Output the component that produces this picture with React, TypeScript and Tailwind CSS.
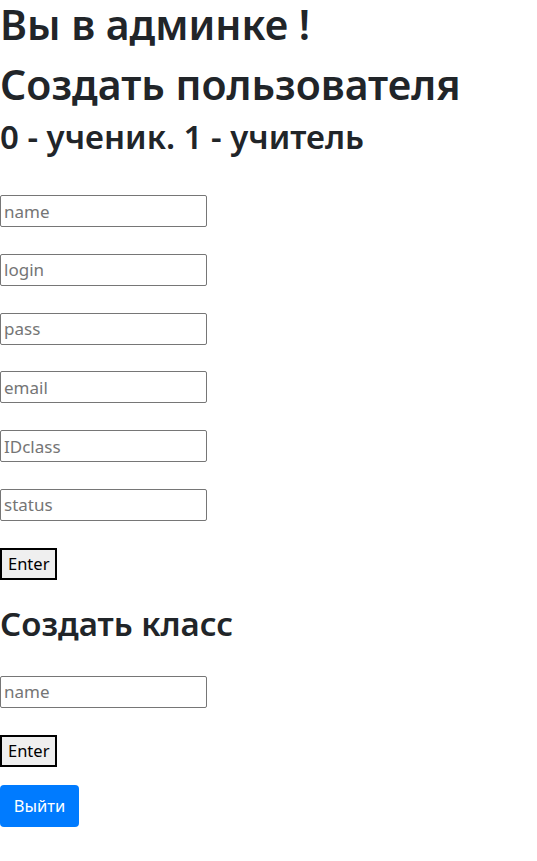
export default function App() {
  const inputCls =
    "block w-[207px] h-[32px] border border-[#767676] rounded-[2px] px-[3px] text-[17px] text-[#212529] placeholder:text-[#757575] bg-white outline-none";
  const btnCls =
    "block h-[32px] px-[6px] border-2 border-black bg-[#efefef] text-[16.5px] text-black leading-none";
  return (
    <div className="min-h-[861px] bg-white text-[#212529]" style={{ fontFamily: '"Noto Sans", "Open Sans", sans-serif' }}>
      <h1 className="text-[41px] leading-[48px] font-semibold mb-[12px]">Вы в админке !</h1>
      <h1 className="text-[41px] leading-[48px] font-semibold mb-[10px]">Создать пользователя</h1>
      <h2 className="text-[33px] leading-[38px] font-semibold">0 - ученик. 1 - учитель</h2>
      <div className="pt-[39px]">
        <input className={inputCls + " mb-[26.8px]"} placeholder="name" />
        <input className={inputCls + " mb-[26.8px]"} placeholder="login" />
        <input className={inputCls + " mb-[26.8px]"} placeholder="pass" />
        <input className={inputCls + " mb-[26.8px]"} placeholder="email" />
        <input className={inputCls + " mb-[26.8px]"} placeholder="IDclass" />
        <input className={inputCls + " mb-[27px]"} placeholder="status" />
        <button className={btnCls}>Enter</button>
      </div>
      <h2 className="text-[33px] leading-[38px] font-semibold mt-[25px] mb-2">Создать класс</h2>
      <div className="pt-[25px]">
        <input className={inputCls + " mb-[27px]"} placeholder="name" />
        <button className={btnCls}>Enter</button>
      </div>
      <button className="mt-[18px] block h-[42px] w-[79px] rounded-[4px] bg-[#007bff] text-white text-[16.5px]">
        Выйти
      </button>
    </div>
  );
}
